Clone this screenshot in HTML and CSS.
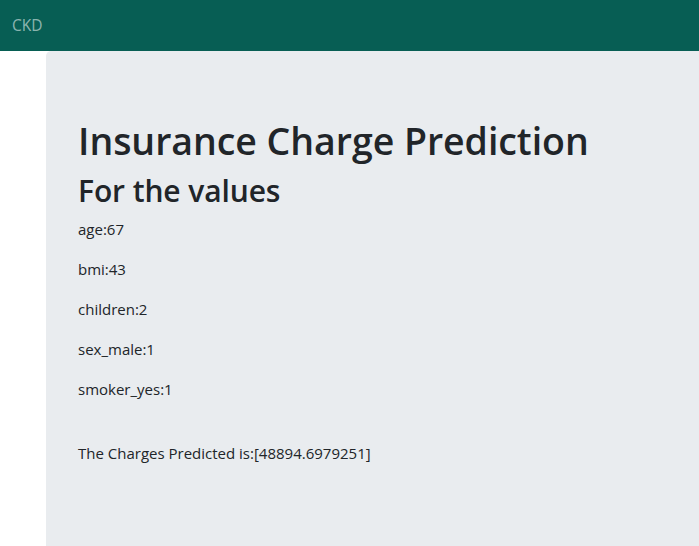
FILE: index.html
```html
<!DOCTYPE html>
<html>
<head>
<meta charset="utf-8">
<link rel="stylesheet" href="styles.css">
</head>
<body>
<nav class="navbar"><span class="brand">CKD</span></nav>
<main class="jumbotron">
  <h1 class="title">Insurance Charge Prediction</h1>
  <h2 class="subtitle">For the values</h2>
  <p class="val">age:67</p>
  <p class="val">bmi:43</p>
  <p class="val">children:2</p>
  <p class="val">sex_male:1</p>
  <p class="val">smoker_yes:1</p>
  <div class="spacer"></div>
  <p class="val">The Charges Predicted is:[48894.6979251]</p>
</main>
</body>
</html>
```
FILE: styles.css
```css
html, body {
  margin: 0;
  padding: 0;
  overflow: hidden;
  height: 100%;
}
body {
  font-family: "Open Sans", "Noto Sans", sans-serif;
  color: #212529;
  background: #fff;
  font-size: 16px;
  line-height: 1.5;
}
.navbar {
  height: 51px;
  background: #075e54;
  display: flex;
  align-items: center;
  padding-left: 12px;
}
.brand {
  color: rgba(255,255,255,0.55);
  font-size: 15.5px;
}
.jumbotron {
  margin-left: 46px;
  width: 760px;
  min-height: 600px;
  background: #e9ecef;
  border-radius: 5px 0 0 0;
  padding: 64px 32px;
  box-sizing: border-box;
}
.title {
  font-size: 37.5px;
  font-weight: 600;
  line-height: 48px;
  margin: 2px 0 7px 0;
  letter-spacing: -0.05px;
}
.subtitle {
  font-size: 30px;
  font-weight: 600;
  line-height: 38px;
  margin: 0 0 7px 0;
  letter-spacing: -0.1px;
}
.val {
  margin: 0 0 16px 0;
  font-size: 15px;
  line-height: 24px;
}
.spacer {
  height: 24px;
}
```
